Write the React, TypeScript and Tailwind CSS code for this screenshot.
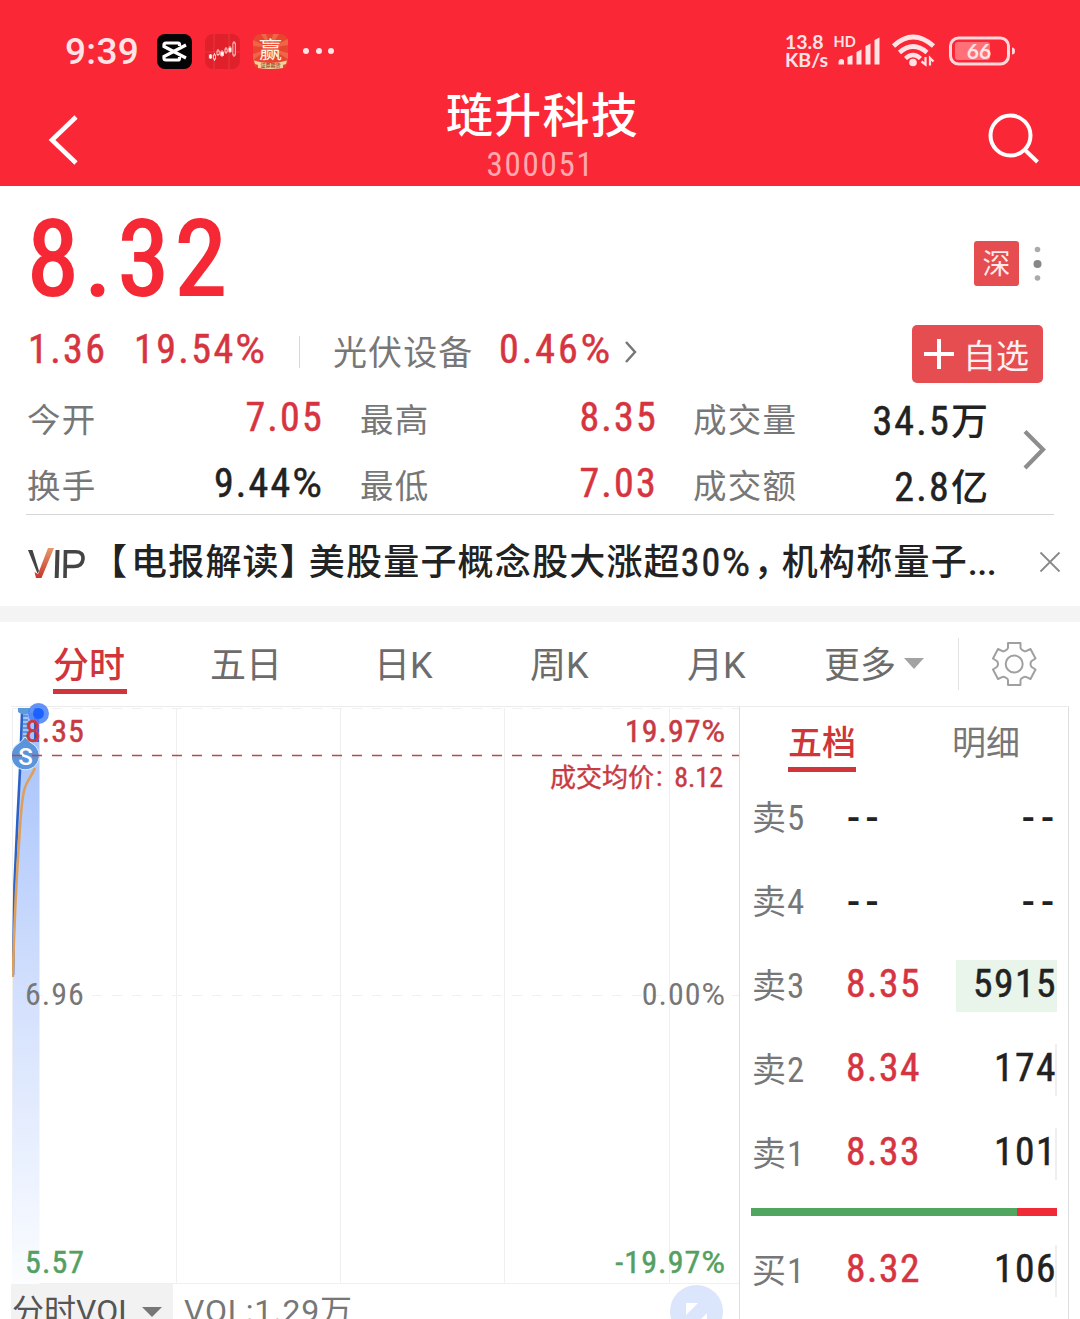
import React from 'react';
import clsx from 'clsx';

interface Quote {
  label: string;
  price: string;
  volume: string;
  highlight?: boolean;
}

const sells: Quote[] = [
  { label: '卖5', price: '--', volume: '--' },
  { label: '卖4', price: '--', volume: '--' },
  { label: '卖3', price: '8.35', volume: '5915', highlight: true },
  { label: '卖2', price: '8.34', volume: '174' },
  { label: '卖1', price: '8.33', volume: '101' },
];

const buys: Quote[] = [{ label: '买1', price: '8.32', volume: '106' }];

function StatusBar() {
  return (
    <div className="flex h-[80px] items-start pt-[26px] pl-[65px] pr-[64px] text-[#ffe3e5]">
      <span className="w-[92px] pt-px text-[37px] leading-[50px] font-medium tracking-[0.3px]">9:39</span>
      <svg className="mt-[8px] size-[35px]" viewBox="0 0 35 35" fill="none">
        <rect width="35" height="35" rx="8" fill="#050505" />
        <path d="M22.5 12V10.5a1.5 1.5 0 0 0-1.500-1.500H9a2 2 0 0 0-2 2v1.500L29 24" stroke="#fff" strokeWidth="3.200" />
        <path d="M22.5 23v1.500a1.500 1.500 0 0 1-1.500 1.500H9a2 2 0 0 1-2-2v-1.500L29 11" stroke="#fff" strokeWidth="3.200" />
      </svg>
      <svg className="mt-[8px] ml-[13px] size-[35px]" viewBox="0 0 35 35">
        <rect width="35" height="35" rx="8" fill="#e0202b" />
        <path d="M9 0v35M24 0v35M0 18h35" stroke="#ee4a48" strokeWidth="0.6" />
        <g stroke="#ffd9d6" strokeWidth="0.9">
          <path d="M5.500 20v5M9.500 19v8M13 15v7M17 16v7M21 13v7M25 12v7M29 7v16" />
          <rect x="4.300" y="21" width="2.400" height="3" fill="#fff" />
          <rect x="8.400" y="21" width="2.200" height="4" fill="#e0202b" />
          <rect x="12" y="17" width="2.200" height="3.500" fill="#e0202b" />
          <rect x="15.800" y="18" width="2.600" height="3.500" fill="#fff" />
          <rect x="20" y="15" width="2.200" height="3" fill="#e0202b" />
          <rect x="23.900" y="14" width="2.200" height="3.500" fill="#fff" />
          <rect x="27.900" y="9" width="2.400" height="12" fill="#e0202b" />
        </g>
      </svg>
      <svg className="mt-[8px] ml-[13px] size-[35px]" viewBox="0 0 35 35">
        <rect width="35" height="35" rx="8" fill="#e8452f" />
        <path d="M17 14 0 6v6zM17 14 8 0h5zM17 14 20 0h6zM17 14 35 5v6zM17 14 0 20v6zM17 14 35 19v6z" fill="#f0654a" />
        <text x="17.500" y="24" textAnchor="middle" fontSize="23" fill="#fff3e6">赢</text>
        <path d="M1 26.500q16 5 33 0l-1 3.500-3 1v3q-13 2-25 0v-3l-3-1z" fill="#f4cf9f" />
        <text x="17.500" y="33" textAnchor="middle" fontSize="5" fontWeight="500" fill="#8a4a22">证券期货</text>
      </svg>
      <div className="mt-[22px] ml-[15px] flex gap-[6.500px]">
        <i className="size-[6px] rounded-full bg-[#ffe3e5]" />
        <i className="size-[6px] rounded-full bg-[#ffe3e5]" />
        <i className="size-[6px] rounded-full bg-[#ffe3e5]" />
      </div>
      <div className="mt-[7px] ml-auto w-[48px] font-[Lato,sans-serif] text-[19.500px] leading-[18px] font-bold whitespace-nowrap">
        <div>13.8</div>
        <div>KB/s</div>
      </div>
      <svg className="mt-[6px] h-[38px] w-[48px]" viewBox="0 0 48 38" fill="#ffe3e5">
        <text x="0.500" y="14.500" fontFamily="Lato, sans-serif" fontSize="14.500" fontWeight="700">HD</text>
        <path d="M5.500 32.500v-3a3 3 0 0 1 5.500-1v4zM14.500 32.500V25l5-2v9.500zM23.500 32.500V20l5-2.500v15zM32.500 32.500V14l5-2.500v21zM41.500 32.500V8l5-2.500v27z" />
      </svg>
      <svg className="mt-[6px] ml-[10px] h-[38px] w-[46px]" viewBox="0 0 46 38" fill="none" stroke="#ffe3e5">
        <path d="M2.500 14Q22 -4 42.500 14" strokeWidth="4.600" />
        <path d="M8.500 20.500Q22 8.500 36 20.500" strokeWidth="4.600" />
        <path d="M14.500 26.500Q22 19.500 29.500 26.500" strokeWidth="4.400" />
        <circle cx="22" cy="30.500" r="3.800" fill="#ffe3e5" stroke="none" />
        <path d="m30.500 29.500 4 3V25M39 33.500V26l3.500 3.500" strokeWidth="2.200" />
      </svg>
      <svg className="mt-[8px] ml-[12px] h-[34px] w-[67px]" viewBox="0 0 67 34">
        <rect x="1.500" y="4" width="58" height="26" rx="8" fill="none" stroke="#ffd9dc" strokeWidth="3" />
        <rect x="6" y="8" width="35" height="18" rx="3" fill="#ff7079" />
        <path d="M63 13.500q3 0 3 3.500t-3 3.500z" fill="#ffd9dc" />
        <text x="30" y="24.500" textAnchor="middle" fontFamily="Lato, sans-serif" fontSize="21" fontWeight="700" fill="#ffe3e5">66</text>
      </svg>
    </div>
  );
}

function Header() {
  return (
    <header className="h-[186px] bg-[#fa2736]">
      <StatusBar />
      <div className="flex justify-between pl-[48px] pr-[39px]">
        <svg className="mt-[34px] h-[52px] w-[54px]" viewBox="0 0 54 52" fill="none" stroke="#fff" strokeWidth="4.600">
          <path d="M28 3 4 26l24 23" />
        </svg>
        <div className="mr-[8px] flex flex-col items-center text-white">
          <h1 className="mt-[9px] ml-[4px] text-[47px] leading-[54px] font-medium tracking-[1.200px]">琏升科技</h1>
          <div className="mt-[4px] text-[33px] leading-[35px] font-normal tracking-[1.700px] font-stretch-[85%] text-[#ffa9af]">300051</div>
        </div>
        <svg className="mt-[32px] h-[54px] w-[54px]" viewBox="0 0 54 54" fill="none" stroke="#fff" strokeWidth="4">
          <circle cx="23.500" cy="23.500" r="20" />
          <path d="m38 38 12.500 12" />
        </svg>
      </div>
    </header>
  );
}

// narrow digits, with the percent sign kept at its full width
function Num({ value }: { value: string }) {
  return (
    <>
      {value.replace('%', '')}
      {value.includes('%') && <span className="font-normal font-stretch-normal">%</span>}
    </>
  );
}

function Stat({ label, value, red, big, className }: { label: string; value: string; red?: boolean; big?: boolean; className: string }) {
  const unit = value.match(/[万亿]/)?.[0];
  return (
    <div className={clsx('flex h-[66px] items-center justify-between', className)}>
      <span className="pt-[4px] text-[33.500px] leading-[50px] tracking-[1.200px] text-[#777]">{label}</span>
      <span
        className={clsx(
          'text-[40px] leading-[50px] font-stretch-[85%]',
          red ? 'text-[#d63440]' : 'text-[#222]',
          big ? 'pt-[7px]' : '-mr-[2px] pb-[2px]'
        )}
      >
        <span className="tracking-[2.200px] [-webkit-text-stroke:0.5px]">
          <Num value={unit ? value.replace(unit, '') : value} />
        </span>
        {unit && <span className="text-[37px] font-medium">{unit}</span>}
      </span>
    </div>
  );
}

function Summary() {
  return (
    <section className="h-[329px]">
      <div className="flex h-[136px] items-start pr-[36px]">
        <div className="pt-[19px] pl-[27px] text-[105px] leading-[110px] font-normal tracking-[5.500px] font-stretch-[85%] text-[#f52835] [-webkit-text-stroke:2px]">8.32</div>
        <div className="mt-[55px] ml-auto flex size-[45px] items-center justify-center rounded-[3px] bg-[#e54d51] pt-[3px] text-[28px] text-[#ffeaea]">
          深
        </div>
        <svg className="mt-[55px] ml-[13px] h-[45px] w-[12px]" viewBox="0 0 12 45">
          <circle cx="5.500" cy="8.500" r="2.800" fill="#aaa" />
          <circle cx="5.500" cy="23" r="4" fill="#888" />
          <circle cx="5.500" cy="37" r="2.800" fill="#aaa" />
        </svg>
      </div>
      <div className="flex h-[64px] items-start pr-[37px] pl-[28px] text-[40px] leading-[55px] tracking-[2.400px] font-stretch-[85%] text-[#d63440]">
        <span className="w-[106px] [-webkit-text-stroke:0.5px]">
          <Num value="1.36" />
        </span>
        <span className="w-[165px] [-webkit-text-stroke:0.5px]">
          <Num value="19.54%" />
        </span>
        <i className="mt-[14px] h-[32px] w-px bg-[#d8d8d8]" />
        <span className="ml-[33px] w-[166px] pt-[4px] text-[34px] font-normal tracking-[1.100px] text-[#777]">光伏设备</span>
        <span className="w-[112px] tracking-[3px] [-webkit-text-stroke:0.5px]">
          <Num value="0.46%" />
        </span>
        <svg className="mt-[18px] ml-[13px] h-[24px] w-[14px]" viewBox="0 0 14 24" fill="none" stroke="#777" strokeWidth="2.500">
          <path d="m2 2 9 10-9 10" />
        </svg>
        <button className="mt-[3px] ml-auto flex h-[58px] w-[131px] items-center rounded-[5px] bg-[#e54d51] pl-[12px] text-[33px] font-normal tracking-normal text-[#ffeff0]">
          <svg className="mr-[9px] size-[30px]" viewBox="0 0 30 30" stroke="#fff" strokeWidth="4">
            <path d="M15 0v30M0 15h30" />
          </svg>
          <span className="pt-[5px]">自选</span>
        </button>
      </div>
      <div className="flex h-[128px] pl-[27px]">
        <div className="w-[295px]">
          <Stat className="w-full" label="今开" value="7.05" red />
          <Stat className="w-full" label="换手" value="9.44%" />
        </div>
        <div className="ml-[38px] w-[296px]">
          <Stat className="w-full" label="最高" value="8.35" red />
          <Stat className="w-full" label="最低" value="7.03" red />
        </div>
        <div className="ml-[37px] w-[295px]">
          <Stat className="w-full" label="成交量" value="34.5万" big />
          <Stat className="w-full" label="成交额" value="2.8亿" big />
        </div>
        <svg className="mt-[42px] ml-[33px] h-[44px] w-[26px]" viewBox="0 0 26 44" fill="none" stroke="#8d8d8d" strokeWidth="4.200">
          <path d="M4 3.500 22 21.500 4 40" />
        </svg>
      </div>
      <div className="ml-[26px] h-px w-[1028px] bg-[#d6d6d6]" />
    </section>
  );
}

function News() {
  return (
    <div className="flex h-[91px] items-start pl-[28px]">
      <svg className="mt-[32px] h-[34px] w-[60px]" viewBox="0 0 60 34">
        <defs>
          <linearGradient id="tick" x1="0" y1="0" x2="0" y2="1">
            <stop offset="0" stopColor="#e59a6c" />
            <stop offset="1" stopColor="#c8352c" />
          </linearGradient>
        </defs>
        <path d="M0 3h4.500L11 24l-1.500 2.500z" fill="#444" />
        <path d="m20 1h6L13.500 31H8L6.500 25l3.500 2z" fill="url(#tick)" />
        <path d="M27.500 3h4l-.8 28h-4z" fill="#444" />
        <path d="M37 31 37.500 4.800h10q8 0 7.500 7.200-.8 7.500-9 7.500H38" fill="none" stroke="#444" strokeWidth="3.600" />
      </svg>
      <p className="flex pt-[21px] pl-[3px] text-[36px] leading-[54px] font-medium tracking-[1.200px] whitespace-nowrap text-[#222]">
        <span className="w-[40px]">【</span>
        <span>电报解读</span>
        <span className="w-[29px]">】</span>
        <span>美股量子概念股大涨超</span>
        <span className="w-[73px] text-[38px] font-normal tracking-[1.800px] font-stretch-[85%] [-webkit-text-stroke:0.5px]">
          <Num value="30%" />
        </span>
        <span className="w-[28px]">，</span>
        <span>机构称量子</span>
        <span className="tracking-[-0.500px]">...</span>
      </p>
      <svg className="mt-[36px] mr-[19px] ml-auto size-[22px]" viewBox="0 0 22 22" stroke="#888" strokeWidth="1.800">
        <path d="m1.500 1.500 19 19M20.500 1.500l-19 19" />
      </svg>
    </div>
  );
}

function Tabs() {
  return (
    <nav className="flex h-[84px] items-start pl-[53px] text-[36px] leading-[54px] text-[#6c6c6c]">
      <div className="mr-[83px] h-[72px] w-[74px] border-b-[5px] border-[#d03539] pt-[17px] font-medium text-[#d03539]">分时</div>
      <div className="w-[164px] pt-[17px]">五日</div>
      <div className="w-[156px] pt-[17px]">日K</div>
      <div className="w-[157px] pt-[17px]">周K</div>
      <div className="w-[137px] pt-[17px]">月K</div>
      <div className="w-[80px] pt-[17px]">更多</div>
      <svg className="mt-[35px] h-[12px] w-[20px]" viewBox="0 0 20 12">
        <path d="M0 1h20L10 12z" fill="#a3a3a3" />
      </svg>
      <i className="mt-[16px] ml-[34px] h-[52px] w-px bg-[#e2e2e2]" />
      <svg className="mt-[19px] ml-[32px] size-[46px]" viewBox="0 0 46 46" fill="none" stroke="#a0a0a0" strokeWidth="2" strokeLinejoin="round">
        <path d="M17 2h12.500v4.500q0 1.500 1.500 2.300l1.800 1q1.400.8 2.700 0L39.500 8l5 9.500-3.800 2.500q-1.200 1-1.200 3t1.200 3l3.800 2.500-5 9.500-4-1.800q-1.300-.8-2.700 0l-1.800 1q-1.500.8-1.500 2.300V44H17v-4.500q0-1.500-1.500-2.300l-1.800-1q-1.400-.8-2.700 0L7 38l-5-9.500L5.800 26Q7 25 7 23t-1.200-3L2 17.500 7 8l4 1.800q1.300.8 2.700 0l1.800-1Q17 8 17 6.500z" />
        <circle cx="23.200" cy="23" r="8.500" />
      </svg>
    </nav>
  );
}

function AxisLabel({ x, y, value, end }: { x: number; y: number; value: string; end?: boolean }) {
  return (
    <text x={x} y={y} textAnchor={end ? 'end' : 'start'}>
      {value.replace('%', '')}
      {value.includes('%') && <tspan className="font-normal font-stretch-normal">%</tspan>}
    </text>
  );
}

function Chart() {
  return (
    <svg className="block h-[577px] w-[728px] overflow-visible" viewBox="11 707 728 577" fill="none">
      <defs>
        <linearGradient id="area" x1="0" y1="706" x2="0" y2="1284" gradientUnits="userSpaceOnUse">
          <stop offset="0" stopColor="#a3c0fb" />
          <stop offset="0.500" stopColor="#d3e0fd" />
          <stop offset="1" stopColor="#fbfdff" />
        </linearGradient>
        <clipPath id="plot">
          <path d="M12 700h727v590H12z" />
        </clipPath>
      </defs>
      <g stroke="#f0f0f0" strokeWidth="1">
        <path d="M12.500 708v576M176.500 708v576M340.500 708v576M504.500 708v576M669.500 708v576" />
        <path d="M12 708.500h727M12 995.500h727" strokeDasharray="10 10" />
        <path d="M12 1283.500h727" />
      </g>
      <g clipPath="url(#plot)">
        <path d="M13 975 20 770 22 713H39.500V1284H12z" fill="url(#area)" />
        <path d="M13 975 14.500 884 17.500 818 20 770 22 713" stroke="#2c62c8" strokeWidth="2.600" />
        <path d="M36.500 708v34" stroke="#2b62d6" strokeWidth="5" />
        <path d="M25.500 715v24" stroke="#5f97e2" strokeWidth="5" strokeDasharray="2 2" />
        <path d="M12.800 977C14 930 17 870 19.500 835 21 810 22.500 796 24.500 789 27 780 32 776 35 768" stroke="#dda05c" strokeWidth="2.600" />
        <path d="M18 708h12v4q-5 5-12 0z" fill="#5b9bdc" />
        <path d="M25 737q4 5 8.500 7.500a14 14 0 1 1-16.500 0q4.500-2.500 8-7.500z" fill="#5a95db" stroke="#e3efff" strokeWidth="1" />
        <text x="25.500" y="765" textAnchor="middle" fontFamily="Roboto, sans-serif" fontSize="24" fontWeight="500" fill="#fff">S</text>
        <path d="M12 755.500h728" stroke="#b8484c" strokeWidth="1.600" strokeDasharray="10 10" />
      </g>
      <circle cx="38.500" cy="713.500" r="10.500" fill="#4681f7" fillOpacity="0.850" />
      <circle cx="38.500" cy="713.500" r="5.500" fill="#1c62ff" />
      <g className="tracking-[1px] font-stretch-[85%]" fontSize="32" fill="#c83a42" stroke="#c83a42" strokeWidth="0.500">
        <AxisLabel x={25} y={742} value="8.35" />
        <AxisLabel x={726} y={742} value="19.97%" end />
      </g>
      <g className="font-stretch-[85%]" fill="#c83a42" stroke="#c83a42" strokeWidth="0.400">
        <text x="550" y="787" fontSize="26">成交均价</text>
        <text x="656" y="786" fontSize="27">:</text>
        <text x="723" y="786.500" fontSize="28" textAnchor="end">8.12</text>
      </g>
      <g className="tracking-[1px] font-stretch-[85%]" fontSize="32" fill="#777">
        <AxisLabel x={25} y={1005} value="6.96" />
        <AxisLabel x={726} y={1005} value="0.00%" end />
      </g>
      <g className="tracking-[1.100px] font-stretch-[85%]" fontSize="32" fill="#559f62" stroke="#559f62" strokeWidth="0.500">
        <AxisLabel x={25} y={1273} value="5.57" />
        <AxisLabel x={726} y={1273} value="-19.97%" end />
      </g>
    </svg>
  );
}

function QuoteRow({ quote }: { quote: Quote }) {
  const empty = quote.price === '--';
  return (
    <div className="flex h-[84px] items-center leading-[52px]">
      <span className="w-[95px] pt-px pl-px text-[34px] font-stretch-[85%] text-[#777]">
        {quote.label[0]}
        <span className="pl-px text-[35px]">{quote.label[1]}</span>
      </span>
      <span
        className={clsx(
          'w-[110px]',
          empty
            ? 'pl-px text-[38.500px] font-medium tracking-[5.500px] text-[#222]'
            : 'pb-[5px] text-[39.500px] tracking-[1.500px] font-stretch-[85%] text-[#d63440] [-webkit-text-stroke:0.5px]'
        )}
      >
        {quote.price}
      </span>
      <span
        className={clsx(
          'flex h-[52px] w-[101px] justify-end text-[#222]',
          quote.highlight && 'bg-[#e9f4ea]',
          empty
            ? 'text-[38.500px] leading-[52px] font-medium tracking-[6px]'
            : 'text-[39.500px] leading-[47px] tracking-[1.500px] font-stretch-[85%] [-webkit-text-stroke:0.5px]',
          !empty && !quote.highlight && 'border-r-2 border-[#f1eeee]'
        )}
      >
        <span className={clsx(empty && '-mr-[3px]', !empty && !quote.highlight && '-mr-[2px]')}>{quote.volume}</span>
      </span>
    </div>
  );
}

function OrderBook() {
  return (
    <div className="h-[612px] w-[330px] border-x border-[#dedede] pl-[11px]">
      <div className="flex h-[69px] items-start text-[34px] leading-[50px]">
        <div className="ml-[37px] h-[65px] w-[68px] border-b-[5px] border-[#d03539] pt-[11px] font-medium text-[#d03539]">五档</div>
        <div className="ml-[96px] pt-[11px] text-[#777]">明细</div>
      </div>
      {sells.map((q) => (
        <QuoteRow key={q.label} quote={q} />
      ))}
      <div className="mt-[12px] mb-[13px] flex h-[8px] w-[306px]">
        <div className="w-[266px] bg-[#50a65e]" />
        <div className="flex-1 bg-[#f02a36]" />
      </div>
      {buys.map((q) => (
        <QuoteRow key={q.label} quote={q} />
      ))}
    </div>
  );
}

function VolumeBar() {
  return (
    <div className="flex h-[35px] items-start overflow-hidden text-[32px] leading-[50px] text-[#777]">
      <div className="flex h-[35px] w-[162px] items-start bg-[#f2f2f2] pt-[2px] text-[#555]">
        <span className="w-[131px] pl-px whitespace-nowrap">分时VOL</span>
        <svg className="mt-[21px] h-[10px] w-[20px] shrink-0" viewBox="0 0 20 10">
          <path d="M0 0h20L10 10z" fill="#777" />
        </svg>
      </div>
      <span className="pt-[2px] pl-[11px] tracking-[0.800px]">VOL:1.29万</span>
      <svg className="mr-[16px] ml-auto size-[54px]" viewBox="0 0 54 54">
        <circle cx="27.500" cy="27.500" r="26.500" fill="#dbe5fb" />
        <path d="M17 19h12L17 31zM38 29v12H26z" fill="#fff" />
      </svg>
    </div>
  );
}

export default function App() {
  return (
    <div className="h-[1319px] w-[1080px] overflow-hidden bg-white font-[Roboto,'Noto_Sans_CJK_SC',sans-serif]">
      <Header />
      <Summary />
      <News />
      <div className="h-[16px] bg-[#f4f4f4]" />
      <Tabs />
      <div className="ml-[11px] flex h-[613px] w-[1058px] border-t border-[#ececec]">
        <div className="w-[728px]">
          <Chart />
          <VolumeBar />
        </div>
        <OrderBook />
      </div>
    </div>
  );
}
